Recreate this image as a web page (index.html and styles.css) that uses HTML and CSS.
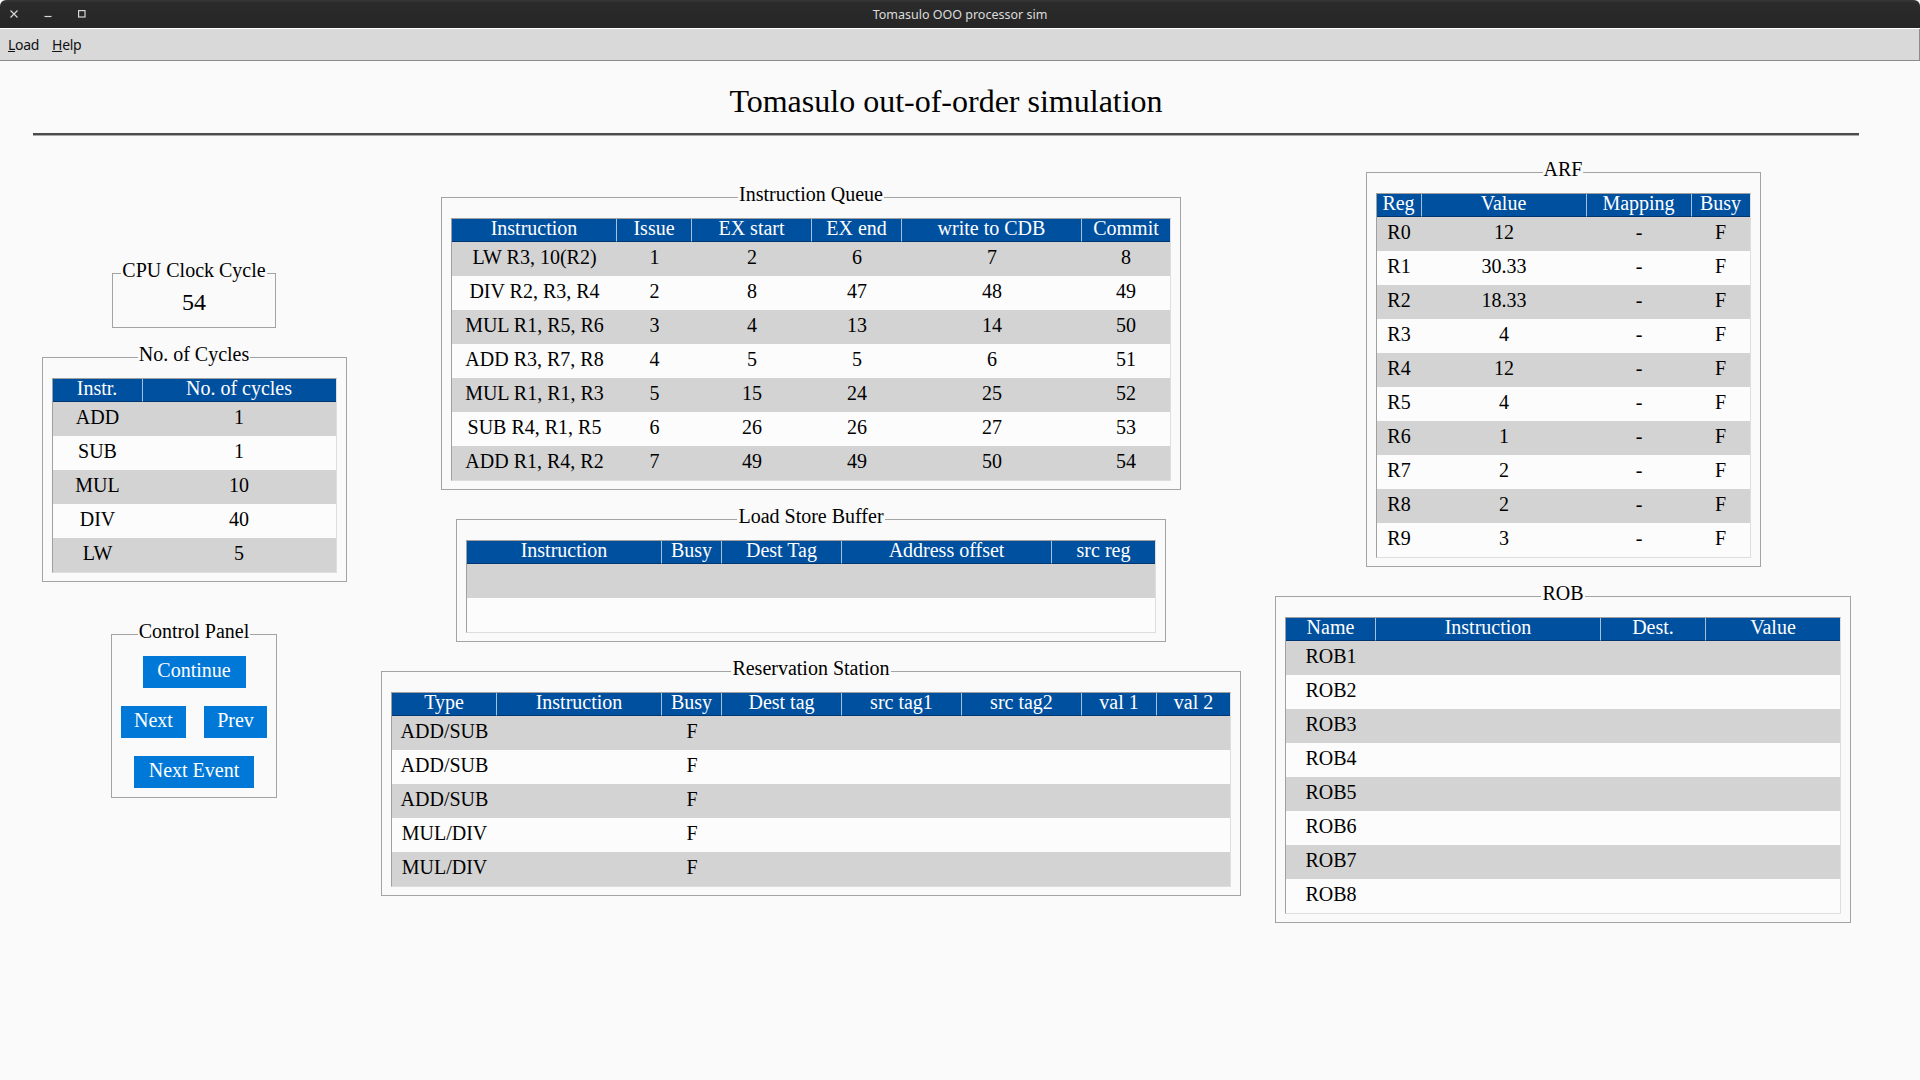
FILE: index.html
```html
<!DOCTYPE html>
<html lang="en">
<head>
<meta charset="utf-8">
<title>Tomasulo OOO processor sim</title>
<link rel="stylesheet" href="styles.css">
</head>
<body>
<header class="titlebar">
  <div class="win-controls">
    <svg class="win-icon" width="8" height="8" viewBox="0 0 8 8"><path d="M0.5 0.5L7.5 7.5M7.5 0.5L0.5 7.5" stroke="#d6d6d6" stroke-width="1.2" fill="none"/></svg>
    <svg class="win-icon" width="8" height="8" viewBox="0 0 8 8"><path d="M0.5 6.5H7.5" stroke="#d6d6d6" stroke-width="1.2" fill="none"/></svg>
    <svg class="win-icon" width="8" height="8" viewBox="0 0 8 8"><rect x="0.6" y="0.6" width="6.4" height="6.4" stroke="#d6d6d6" stroke-width="1.2" fill="none"/></svg>
  </div>
  <div class="win-title">Tomasulo OOO processor sim</div>
  <div></div>
</header>
<nav class="menubar">
  <span class="menu-item"><u>L</u>oad</span>
  <span class="menu-item"><u>H</u>elp</span>
</nav>

<main class="main">
  <h1 class="heading">Tomasulo out-of-order simulation</h1>
  <div class="rule"></div>

  <div class="board">
    <!-- Left column -->
    <section class="col col-left">
      <fieldset class="group clock">
        <legend>CPU Clock Cycle</legend>
        <div class="clock-value">54</div>
      </fieldset>

      <fieldset class="group cycles">
        <legend>No. of Cycles</legend>
        <div class="grid-table">
          <div class="tr cols-cycles thead">
            <div class="th">Instr.</div><div class="th">No. of cycles</div>
          </div>
          <div class="tbody">
            <div class="tr cols-cycles"><div class="td">ADD</div><div class="td">1</div></div>
            <div class="tr cols-cycles"><div class="td">SUB</div><div class="td">1</div></div>
            <div class="tr cols-cycles"><div class="td">MUL</div><div class="td">10</div></div>
            <div class="tr cols-cycles"><div class="td">DIV</div><div class="td">40</div></div>
            <div class="tr cols-cycles"><div class="td">LW</div><div class="td">5</div></div>
          </div>
        </div>
      </fieldset>

      <fieldset class="group control">
        <legend>Control Panel</legend>
        <div class="ctrl-row center"><button class="btn btn-continue">Continue</button></div>
        <div class="ctrl-row split"><button class="btn btn-next">Next</button><button class="btn btn-prev">Prev</button></div>
        <div class="ctrl-row center"><button class="btn btn-event">Next Event</button></div>
      </fieldset>
    </section>

    <!-- Middle column -->
    <section class="col col-mid">
      <fieldset class="group">
        <legend>Instruction Queue</legend>
        <div class="grid-table">
          <div class="tr cols-iq thead">
            <div class="th">Instruction</div><div class="th">Issue</div><div class="th">EX start</div><div class="th">EX end</div><div class="th">write to CDB</div><div class="th">Commit</div>
          </div>
          <div class="tbody">
            <div class="tr cols-iq"><div class="td">LW R3, 10(R2)</div><div class="td">1</div><div class="td">2</div><div class="td">6</div><div class="td">7</div><div class="td">8</div></div>
            <div class="tr cols-iq"><div class="td">DIV R2, R3, R4</div><div class="td">2</div><div class="td">8</div><div class="td">47</div><div class="td">48</div><div class="td">49</div></div>
            <div class="tr cols-iq"><div class="td">MUL R1, R5, R6</div><div class="td">3</div><div class="td">4</div><div class="td">13</div><div class="td">14</div><div class="td">50</div></div>
            <div class="tr cols-iq"><div class="td">ADD R3, R7, R8</div><div class="td">4</div><div class="td">5</div><div class="td">5</div><div class="td">6</div><div class="td">51</div></div>
            <div class="tr cols-iq"><div class="td">MUL R1, R1, R3</div><div class="td">5</div><div class="td">15</div><div class="td">24</div><div class="td">25</div><div class="td">52</div></div>
            <div class="tr cols-iq"><div class="td">SUB R4, R1, R5</div><div class="td">6</div><div class="td">26</div><div class="td">26</div><div class="td">27</div><div class="td">53</div></div>
            <div class="tr cols-iq"><div class="td">ADD R1, R4, R2</div><div class="td">7</div><div class="td">49</div><div class="td">49</div><div class="td">50</div><div class="td">54</div></div>
          </div>
        </div>
      </fieldset>

      <fieldset class="group">
        <legend>Load Store Buffer</legend>
        <div class="grid-table">
          <div class="tr cols-lsb thead">
            <div class="th">Instruction</div><div class="th">Busy</div><div class="th">Dest Tag</div><div class="th">Address offset</div><div class="th">src reg</div>
          </div>
          <div class="tbody">
            <div class="tr cols-lsb"><div class="td"></div><div class="td"></div><div class="td"></div><div class="td"></div><div class="td"></div></div>
            <div class="tr cols-lsb"><div class="td"></div><div class="td"></div><div class="td"></div><div class="td"></div><div class="td"></div></div>
          </div>
        </div>
      </fieldset>

      <fieldset class="group rs">
        <legend>Reservation Station</legend>
        <div class="grid-table">
          <div class="tr cols-rs thead">
            <div class="th">Type</div><div class="th">Instruction</div><div class="th">Busy</div><div class="th">Dest tag</div><div class="th">src tag1</div><div class="th">src tag2</div><div class="th">val 1</div><div class="th">val 2</div>
          </div>
          <div class="tbody">
            <div class="tr cols-rs"><div class="td">ADD/SUB</div><div class="td"></div><div class="td">F</div><div class="td"></div><div class="td"></div><div class="td"></div><div class="td"></div><div class="td"></div></div>
            <div class="tr cols-rs"><div class="td">ADD/SUB</div><div class="td"></div><div class="td">F</div><div class="td"></div><div class="td"></div><div class="td"></div><div class="td"></div><div class="td"></div></div>
            <div class="tr cols-rs"><div class="td">ADD/SUB</div><div class="td"></div><div class="td">F</div><div class="td"></div><div class="td"></div><div class="td"></div><div class="td"></div><div class="td"></div></div>
            <div class="tr cols-rs"><div class="td">MUL/DIV</div><div class="td"></div><div class="td">F</div><div class="td"></div><div class="td"></div><div class="td"></div><div class="td"></div><div class="td"></div></div>
            <div class="tr cols-rs"><div class="td">MUL/DIV</div><div class="td"></div><div class="td">F</div><div class="td"></div><div class="td"></div><div class="td"></div><div class="td"></div><div class="td"></div></div>
          </div>
        </div>
      </fieldset>
    </section>

    <!-- Right column -->
    <section class="col col-right">
      <fieldset class="group">
        <legend>ARF</legend>
        <div class="grid-table">
          <div class="tr cols-arf thead">
            <div class="th">Reg</div><div class="th">Value</div><div class="th">Mapping</div><div class="th">Busy</div>
          </div>
          <div class="tbody">
            <div class="tr cols-arf"><div class="td">R0</div><div class="td">12</div><div class="td">-</div><div class="td">F</div></div>
            <div class="tr cols-arf"><div class="td">R1</div><div class="td">30.33</div><div class="td">-</div><div class="td">F</div></div>
            <div class="tr cols-arf"><div class="td">R2</div><div class="td">18.33</div><div class="td">-</div><div class="td">F</div></div>
            <div class="tr cols-arf"><div class="td">R3</div><div class="td">4</div><div class="td">-</div><div class="td">F</div></div>
            <div class="tr cols-arf"><div class="td">R4</div><div class="td">12</div><div class="td">-</div><div class="td">F</div></div>
            <div class="tr cols-arf"><div class="td">R5</div><div class="td">4</div><div class="td">-</div><div class="td">F</div></div>
            <div class="tr cols-arf"><div class="td">R6</div><div class="td">1</div><div class="td">-</div><div class="td">F</div></div>
            <div class="tr cols-arf"><div class="td">R7</div><div class="td">2</div><div class="td">-</div><div class="td">F</div></div>
            <div class="tr cols-arf"><div class="td">R8</div><div class="td">2</div><div class="td">-</div><div class="td">F</div></div>
            <div class="tr cols-arf"><div class="td">R9</div><div class="td">3</div><div class="td">-</div><div class="td">F</div></div>
          </div>
        </div>
      </fieldset>

      <fieldset class="group">
        <legend>ROB</legend>
        <div class="grid-table">
          <div class="tr cols-rob thead">
            <div class="th">Name</div><div class="th">Instruction</div><div class="th">Dest.</div><div class="th">Value</div>
          </div>
          <div class="tbody">
            <div class="tr cols-rob"><div class="td">ROB1</div><div class="td"></div><div class="td"></div><div class="td"></div></div>
            <div class="tr cols-rob"><div class="td">ROB2</div><div class="td"></div><div class="td"></div><div class="td"></div></div>
            <div class="tr cols-rob"><div class="td">ROB3</div><div class="td"></div><div class="td"></div><div class="td"></div></div>
            <div class="tr cols-rob"><div class="td">ROB4</div><div class="td"></div><div class="td"></div><div class="td"></div></div>
            <div class="tr cols-rob"><div class="td">ROB5</div><div class="td"></div><div class="td"></div><div class="td"></div></div>
            <div class="tr cols-rob"><div class="td">ROB6</div><div class="td"></div><div class="td"></div><div class="td"></div></div>
            <div class="tr cols-rob"><div class="td">ROB7</div><div class="td"></div><div class="td"></div><div class="td"></div></div>
            <div class="tr cols-rob"><div class="td">ROB8</div><div class="td"></div><div class="td"></div><div class="td"></div></div>
          </div>
        </div>
      </fieldset>
    </section>
  </div>
</main>
</body>
</html>
```

FILE: styles.css
```css
* { box-sizing: border-box; }

html, body {
  margin: 0;
  padding: 0;
}

body {
  width: 1920px;
  height: 1080px;
  overflow: hidden;
  background: #fafafa;
  color: #000;
  font-family: "Liberation Serif", "Times New Roman", serif;
}

/* ---------- window chrome ---------- */
.titlebar {
  height: 29px;
  background: linear-gradient(#383838, #2b2b2b 3px, #262626);
  border-bottom: 1px solid #ffffff;
  border-radius: 6px 6px 0 0;
  display: grid;
  grid-template-columns: 1fr auto 1fr;
  align-items: center;
}

.win-controls {
  display: flex;
  align-items: center;
  gap: 26px;
  padding-left: 10px;
}

.win-icon { display: block; }

.win-title {
  font-family: "Noto Sans", sans-serif;
  font-size: 12.5px;
  color: #dcdcdc;
}

.menubar {
  height: 32px;
  background: #d9d9d9;
  border-bottom: 1px solid #8c8c8c;
  border-right: 1px solid #8c8c8c;
  display: flex;
  align-items: center;
  gap: 13px;
  padding-left: 8px;
  font-family: "Noto Sans", sans-serif;
  font-size: 14px;
  letter-spacing: -0.3px;
  color: #111;
}

/* ---------- main ---------- */
.main {
  padding: 0 61px 0 33px;
}

.heading {
  margin: 22px 0 0;
  font-size: 32px;
  line-height: 37px;
  font-weight: normal;
  text-align: center;
}

.rule {
  margin-top: 13px;
  height: 3px;
  border-top: 2px solid #4b4b4b;
  border-bottom: 1px solid #a8a8a8;
}

.board {
  display: grid;
  grid-template-columns: 306px 860px 576px;
  column-gap: 34px;
  align-items: start;
  margin: 24px 0 0 8px;
}

.col {
  display: flex;
  flex-direction: column;
  align-items: center;
  gap: 17px;
}

.col-left { padding-top: 101px; }
.col-mid { padding-top: 25px; }

/* ---------- group boxes ---------- */
.group {
  margin: 0;
  min-width: 0;
  padding: 9px 9px 8px;
  border: 1px solid #a3a3a3;
}

.group > legend {
  margin: 0 auto;
  padding: 0 1px 6px;
  font-size: 20px;
  line-height: 18px;
}

.group.cycles { margin-bottom: 23px; }

.clock {
  width: 164px;
  padding: 3px 0 11px;
}

.clock-value {
  font-size: 24px;
  line-height: 28px;
  text-align: center;
}

.control {
  width: 166px;
  padding: 10px 9px 9px;
  display: block;
}

.ctrl-row {
  display: flex;
}

.ctrl-row + .ctrl-row { margin-top: 18px; }

.ctrl-row.center { justify-content: center; }
.ctrl-row.split { justify-content: space-between; }

.btn {
  height: 32px;
  padding: 0 0 4px;
  border: none;
  background: #0078d7;
  color: #fff;
  font-family: "Liberation Serif", "Times New Roman", serif;
  font-size: 20px;
  line-height: 28px;
  text-align: center;
  cursor: pointer;
}

.btn-continue { width: 103px; }
.btn-next { width: 65px; }
.btn-prev { width: 63px; }
.btn-event { width: 120px; }

/* ---------- tables ---------- */
.grid-table {
  border: 1px solid;
  border-color: #a0a0a0 #dedede #dedede #a0a0a0;
  background: #fcfcfc;
}

.tr { display: grid; }

.th {
  height: 23px;
  padding-bottom: 4px;
  line-height: 18px;
  background: #0050a0;
  color: #fff;
  font-size: 20px;
  text-align: center;
  white-space: nowrap;
  border-right: 1px solid #a9bfdc;
  border-bottom: 1px solid #00366f;
}

.th:last-child { border-right: none; }

.td {
  height: 34px;
  padding-bottom: 4px;
  line-height: 30px;
  font-size: 20px;
  text-align: center;
  white-space: nowrap;
}

.tbody .tr:nth-child(odd) { background: #d3d3d3; }

.cols-cycles { grid-template-columns: 90px 193px; }
.cols-iq { grid-template-columns: 165px 75px 120px 90px 180px 88px; }
.cols-lsb { grid-template-columns: 195px 60px 120px 210px 103px; }
.cols-rs { grid-template-columns: 105px 165px 60px 120px 120px 120px 75px 73px; }
.cols-arf { grid-template-columns: 45px 165px 105px 58px; }
.cols-rob { grid-template-columns: 90px 225px 105px 134px; }
```
